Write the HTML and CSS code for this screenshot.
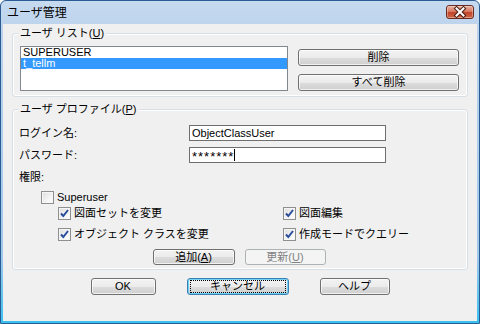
FILE: index.html
```html
<!DOCTYPE html>
<html lang="ja">

<head>
    <meta charset="UTF-8">
    <meta name="viewport" content="width=device-width, initial-scale=1.0">
    <title>ユーザ管理</title>
    <link rel="stylesheet" href="styles.css">
</head>

<body>
    <div class="window">
        <div class="titlebar">
            <span class="title">ユーザ管理</span>
            <button class="close" title="閉じる">
                <svg width="26" height="12" viewBox="0 0 26 12">
                    <path d="M9.5 2.5 L16.5 9.5 M16.5 2.5 L9.5 9.5" stroke="#4a1d15" stroke-width="4" stroke-linecap="square" fill="none"/>
                    <path d="M9.5 2.5 L16.5 9.5 M16.5 2.5 L9.5 9.5" stroke="#ffffff" stroke-width="2" stroke-linecap="square" fill="none"/>
                </svg>
            </button>
        </div>
        <div class="client">
            <div class="group users">
                <div class="group-title">ユーザ リスト(<u>U</u>)</div>
                <div class="list-row">
                    <div class="listbox">
                        <div class="item">SUPERUSER</div>
                        <div class="item selected">t_tellm</div>
                    </div>
                    <div class="list-actions">
                        <button class="btn">削除</button>
                        <button class="btn">すべて削除</button>
                    </div>
                </div>
            </div>

            <div class="group profile">
                <div class="group-title">ユーザ プロファイル(<u>P</u>)</div>
                <div class="field first">
                    <span class="label">ログイン名:</span>
                    <div class="input">ObjectClassUser</div>
                </div>
                <div class="field">
                    <span class="label">パスワード:</span>
                    <div class="input"><span class="secret">*******</span><span class="caret"></span></div>
                </div>
                <div class="perm-label">権限:</div>
                <div class="check super">
                    <span class="box"></span>
                    <span>Superuser</span>
                </div>
                <div class="perms">
                    <div class="check">
                        <span class="box on"><svg width="11" height="11" viewBox="0 0 11 11"><path d="M2 5.5 L4.3 8 L9 2" stroke="#2a4c9c" stroke-width="2" fill="none"/></svg></span>
                        <span>図面セットを変更</span>
                    </div>
                    <div class="check">
                        <span class="box on"><svg width="11" height="11" viewBox="0 0 11 11"><path d="M2 5.5 L4.3 8 L9 2" stroke="#2a4c9c" stroke-width="2" fill="none"/></svg></span>
                        <span>図面編集</span>
                    </div>
                    <div class="check">
                        <span class="box on"><svg width="11" height="11" viewBox="0 0 11 11"><path d="M2 5.5 L4.3 8 L9 2" stroke="#2a4c9c" stroke-width="2" fill="none"/></svg></span>
                        <span>オブジェクト クラスを変更</span>
                    </div>
                    <div class="check">
                        <span class="box on"><svg width="11" height="11" viewBox="0 0 11 11"><path d="M2 5.5 L4.3 8 L9 2" stroke="#2a4c9c" stroke-width="2" fill="none"/></svg></span>
                        <span>作成モードでクエリー</span>
                    </div>
                </div>
                <div class="profile-actions">
                    <button class="btn add">追加(<u>A</u>)</button>
                    <button class="btn update" disabled>更新(<u>U</u>)</button>
                </div>
            </div>

            <div class="dialog-buttons">
                <button class="btn ok">OK</button>
                <button class="btn cancel"><span class="focus">キャンセル</span></button>
                <button class="btn help">ヘルプ</button>
            </div>
        </div>
    </div>
</body>

</html>
```

FILE: styles.css
```css
body {
    margin: 0;
    padding: 0;
    width: 480px;
    height: 324px;
    overflow: hidden;
    font-family: "Liberation Sans", "Noto Sans CJK JP", sans-serif;
    font-size: 11px;
    color: #000;
}

.window {
    box-sizing: border-box;
    width: 480px;
    height: 324px;
    border: 1px solid #2a5b93;
    border-radius: 6px 6px 0 0;
    padding: 0 2px 2px 2px;
    display: flex;
    flex-direction: column;
    background: linear-gradient(to bottom, #c6daf0 0, #bcd3ec 30px, #9ec8ec 80%, #38c0ef 100%);
}

.titlebar {
    height: 23px;
    display: flex;
    align-items: center;
    justify-content: space-between;
    padding: 0 3px 0 4px;
}

.title {
    font-size: 12px;
    line-height: 14px;
    margin-top: 1px;
}

.close {
    width: 28px;
    height: 14px;
    margin-top: -2px;
    padding: 0;
    border: 1px solid #6b2a20;
    border-radius: 3px;
    display: flex;
    align-items: center;
    justify-content: center;
    background: linear-gradient(to bottom, #eab1a2 0, #d97a62 45%, #c2432a 55%, #d0664a 100%);
    box-shadow: inset 0 0 0 1px rgba(255, 255, 255, 0.35);
}

.client {
    flex: 1;
    background: #f0f0f0;
    padding-top: 9px;
}

/* group boxes */

.group {
    margin: 0 9px;
    border: 1px solid #d5dfe5;
    border-radius: 3px;
    box-shadow: inset 0 0 0 1px #ffffff;
}

.group-title {
    width: fit-content;
    margin-top: -7px;
    padding: 0 2px;
    line-height: 13px;
    background: #f0f0f0;
}

.users {
    padding: 0 8px 5px 7px;
}

.users .group-title {
    margin-left: -2px;
}

.list-row {
    display: flex;
    gap: 10px;
    margin-top: 6px;
}

.listbox {
    box-sizing: border-box;
    width: 268px;
    height: 45px;
    border: 1px solid #828790;
    background: #fff;
}

.item {
    line-height: 11px;
    height: 11px;
    padding-left: 2px;
}

.item.selected {
    background: #3399ff;
    color: #fff;
}

.list-actions {
    width: 161px;
    padding-top: 3px;
    display: flex;
    flex-direction: column;
    gap: 8px;
}

.list-actions .btn {
    height: 17px;
}

/* buttons */

.btn {
    box-sizing: border-box;
    height: 17px;
    padding: 0;
    border: 1px solid #707070;
    border-radius: 3px;
    font-family: inherit;
    font-size: 11px;
    line-height: 13px;
    color: #000;
    background: linear-gradient(to bottom, #f3f3f3 0, #ebebeb 50%, #dddddd 51%, #cfcfcf 100%);
    box-shadow: inset 0 0 0 1px rgba(255, 255, 255, 0.7);
}

.btn:disabled {
    border-color: #adb2b5;
    background: #f4f4f4;
    color: #838383;
    box-shadow: none;
}

/* profile */

.profile {
    margin-top: 12px;
    padding: 0 8px 4px 6px;
}

.profile .group-title {
    margin-left: -1px;
}

.field {
    display: flex;
    align-items: center;
    height: 16px;
    margin-top: 6px;
}

.field.first {
    margin-top: 9px;
}

.label {
    width: 170px;
    line-height: 13px;
}

.input {
    box-sizing: border-box;
    width: 197px;
    height: 16px;
    border: 1px solid #6f6f6f;
    background: #fff;
    padding-left: 2px;
    line-height: 14px;
    display: flex;
    align-items: center;
}

.secret {
    font-size: 13px;
    letter-spacing: 1px;
    line-height: 14px;
    padding-top: 3px;
}

.caret {
    display: inline-block;
    width: 1px;
    height: 12px;
    margin-left: 0;
    background: #000;
}

.perm-label {
    margin-top: 8px;
    line-height: 12px;
    height: 12px;
}

.check {
    display: flex;
    align-items: center;
    gap: 3px;
    height: 13px;
    line-height: 13px;
}

.check.super {
    margin-top: 8px;
    padding-left: 22px;
}

.box {
    box-sizing: border-box;
    width: 13px;
    height: 13px;
    border: 1px solid #8e8f8f;
    background: linear-gradient(135deg, #dcdcdc 0, #f4f4f4 60%, #ffffff 100%);
    box-shadow: inset 0 0 0 1px #f6f6f6;
    display: flex;
    align-items: center;
    justify-content: center;
}

.perms {
    margin: 3px 0 0 39px;
    display: grid;
    grid-template-columns: 225px auto;
    row-gap: 8px;
}

.profile-actions {
    margin-top: 8px;
    display: flex;
    justify-content: center;
    gap: 10px;
}

.profile-actions .btn {
    height: 16px;
}

.add {
    width: 82px;
}

.update {
    width: 81px;
}

/* dialog buttons */

.dialog-buttons {
    margin-top: 8px;
    display: flex;
    justify-content: center;
    gap: 31px;
}

.ok {
    width: 65px;
}

.cancel {
    width: 102px;
    border-color: #3c7fb1;
    box-shadow: inset 0 0 0 1px #6fd3f5;
    padding: 1px 2px;
}

.cancel .focus {
    display: block;
    height: 100%;
    box-sizing: border-box;
    border: 1px dotted #000;
    line-height: 11px;
}

.help {
    width: 70px;
}
```
